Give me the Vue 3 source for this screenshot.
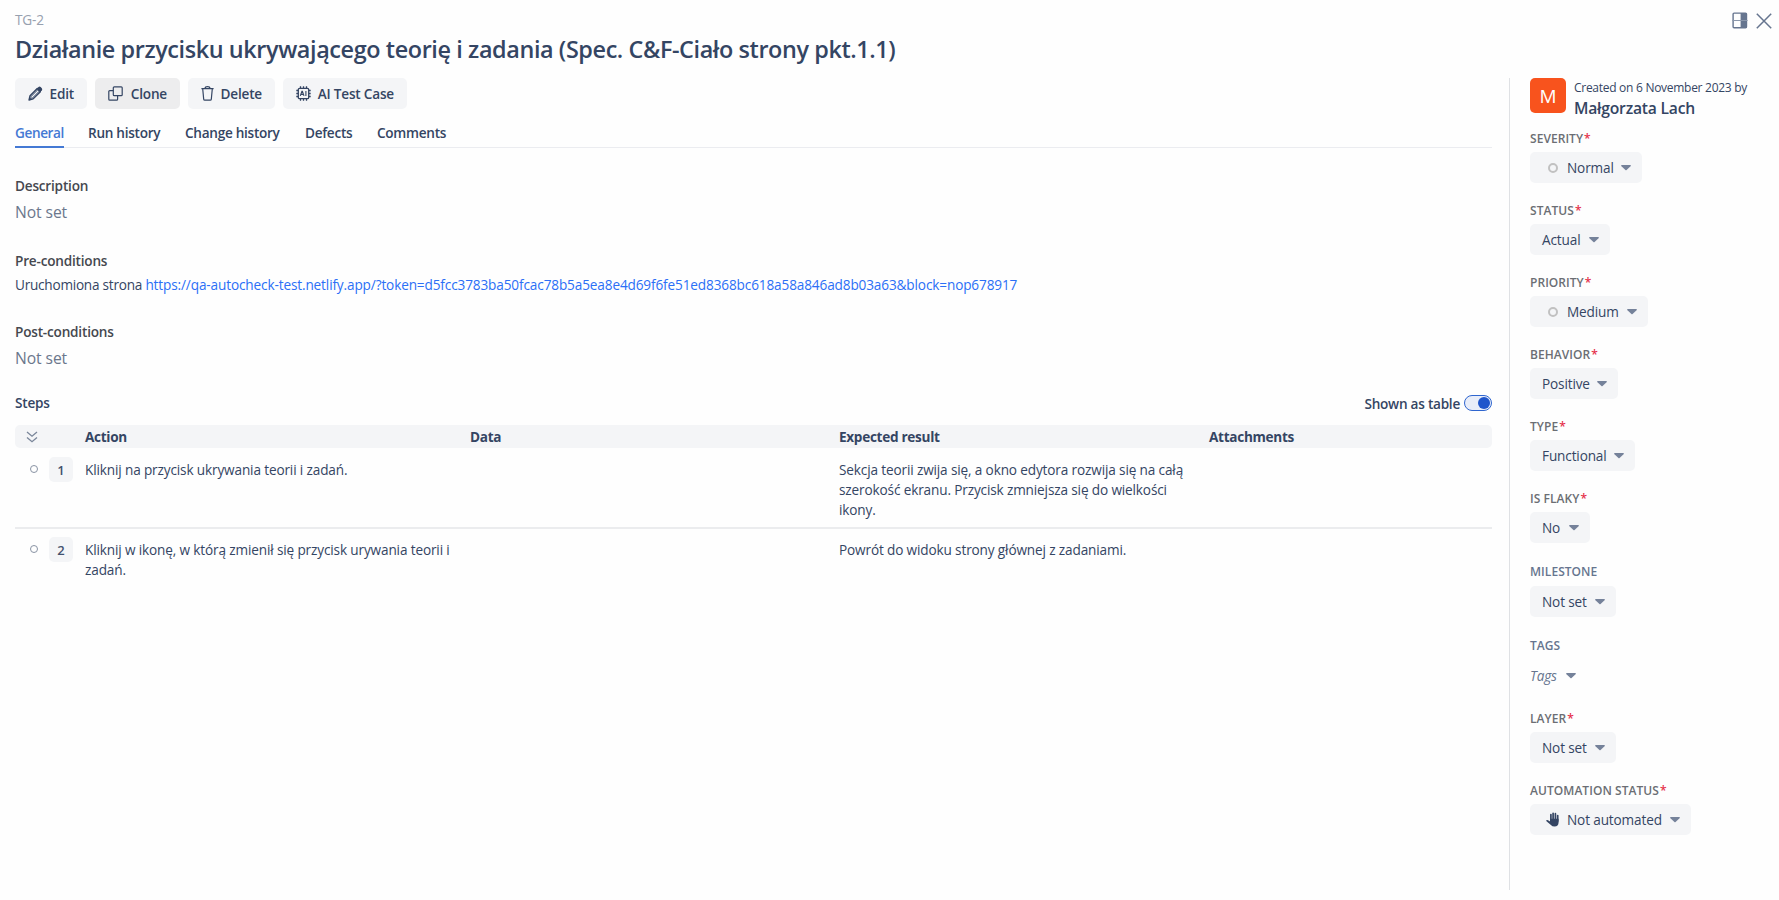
<script setup>
const actions = [
  { label: 'Edit', icon: 'pencil', width: 72 },
  { label: 'Clone', icon: 'clone', width: 85, hovered: true },
  { label: 'Delete', icon: 'trash', width: 87 },
  { label: 'AI Test Case', icon: 'chip', width: 124 },
]

const tabs = [
  { label: 'General', width: 49, active: true },
  { label: 'Run history', width: 73 },
  { label: 'Change history', width: 96 },
  { label: 'Defects', width: 48 },
  { label: 'Comments', width: 69 },
]

const steps = [
  {
    n: 1,
    action: 'Kliknij na przycisk ukrywania teorii i zadań.',
    expected: 'Sekcja teorii zwija się, a okno edytora rozwija się na całą szerokość ekranu. Przycisk zmniejsza się do wielkości ikony.',
  },
  {
    n: 2,
    action: 'Kliknij w ikonę, w którą zmienił się przycisk urywania teorii i zadań.',
    expected: 'Powrót do widoku strony głównej z zadaniami.',
  },
]

const fields = [
  { label: 'Severity', required: true, value: 'Normal', icon: 'ring', width: 112 },
  { label: 'Status', required: true, value: 'Actual', width: 80 },
  { label: 'Priority', required: true, value: 'Medium', icon: 'ring', width: 118 },
  { label: 'Behavior', required: true, value: 'Positive', width: 88 },
  { label: 'Type', required: true, value: 'Functional', width: 105 },
  { label: 'Is flaky', required: true, value: 'No', width: 60 },
  { label: 'Milestone', value: 'Not set', width: 86 },
  { label: 'Tags', value: 'Tags', plain: true, width: 46 },
  { label: 'Layer', required: true, value: 'Not set', width: 86 },
  { label: 'Automation status', required: true, value: 'Not automated', icon: 'hand', width: 161 },
]
</script>

<template>
  <div class="page">
    <header class="head">
      <div class="head-text">
        <div class="code">TG-2</div>
        <h1 class="title">Działanie przycisku ukrywającego teorię i zadania (Spec. C&amp;F-Ciało strony pkt.1.1)</h1>
      </div>
      <div class="window-tools">
        <svg width="16" height="17" viewBox="0 0 16 17">
          <rect x="1.1" y="1.1" width="13.4" height="14.6" rx="1" fill="none" stroke="#66758f" stroke-width="1.4" />
          <rect x="8.6" y="1" width="6" height="15" fill="#66758f" />
          <path d="M0.4 8.5H15.6" stroke="#8b97ab" stroke-width="1" />
        </svg>
        <svg width="16" height="16" viewBox="0 0 16 16">
          <path d="M0.8 0.8L15.2 15.2M15.2 0.8L0.8 15.2" stroke="#66758f" stroke-width="1.5" />
        </svg>
      </div>
    </header>

    <div class="body">
      <main class="main">
        <div class="toolbar">
          <button
            v-for="a in actions"
            :key="a.label"
            class="btn"
            :class="{ hovered: a.hovered }"
            :style="{ width: a.width + 'px' }"
          >
            <svg v-if="a.icon === 'pencil'" width="15" height="15" viewBox="0 0 15 15">
              <path d="M1 14L2 9.7L9.2 2.5L12.4 5.7L5.2 12.9Z" fill="#8994a8" stroke="#344563" stroke-width="1.3" stroke-linejoin="round" />
              <path d="M3.8 11.2L10 5" stroke="#f4f5f7" stroke-width="1" />
              <path d="M8.8 2.6L10.5 1Q11.6 0.2 12.7 1.1L13.8 2.2Q14.7 3.3 13.9 4.3L12.2 6.1Z" fill="#344563" />
              <path d="M1 14L1.6 11.4L3.6 13.3Z" fill="#344563" />
            </svg>
            <svg v-else-if="a.icon === 'clone'" width="15" height="15" viewBox="0 0 15 15" fill="none" stroke="#344563" stroke-width="1.2">
              <rect x="5.3" y="0.8" width="8.9" height="8.9" rx="1" />
              <path d="M5.2 4.6H1.8Q0.8 4.6 0.8 5.6V13.2Q0.8 14.2 1.8 14.2H8.6Q9.6 14.2 9.6 13.2V9.8" />
            </svg>
            <svg v-else-if="a.icon === 'trash'" width="13" height="15" viewBox="0 0 13 15" fill="none" stroke="#344563" stroke-width="1.2">
              <path d="M0.4 2.7H12.6M4 2.5Q4.2 0.7 6.5 0.7T9 2.5M1.7 2.8L2.7 13.2Q2.8 14.2 3.8 14.2H9.2Q10.2 14.2 10.3 13.2L11.3 2.8" />
            </svg>
            <svg v-else width="15" height="15" viewBox="0 0 15 15" fill="none" stroke="#344563" stroke-width="1.3">
              <rect x="2.3" y="2.3" width="10.4" height="10.4" rx="1.3" />
              <path d="M4.5 0.3V2.3M7.5 0.3V2.3M10.5 0.3V2.3M4.5 12.7V14.7M7.5 12.7V14.7M10.5 12.7V14.7M0.3 4.5H2.3M0.3 7.5H2.3M0.3 10.5H2.3M12.7 4.5H14.7M12.7 7.5H14.7M12.7 10.5H14.7" />
              <path d="M4.3 9.9L5.9 5.2H6.4L8 9.9M5 8.4H7.4M9.9 5V10" stroke-width="1.1" />
            </svg>
            <span>{{ a.label }}</span>
          </button>
        </div>

        <nav class="tabs">
          <a
            v-for="t in tabs"
            :key="t.label"
            class="tab"
            :class="{ active: t.active }"
            :style="{ width: t.width + 'px' }"
          >{{ t.label }}</a>
        </nav>

        <section class="block description">
          <h2 class="caption">Description</h2>
          <p class="empty">Not set</p>
        </section>
        <section class="block">
          <h2 class="caption">Pre-conditions</h2>
          <p class="text">
            <span class="lead">Uruchomiona strona </span><a class="link">https://qa-autocheck-test.netlify.app/?token=d5fcc3783ba50fcac78b5a5ea8e4d69f6fe51ed8368bc618a58a846ad8b03a63&amp;block=nop678917</a>
          </p>
        </section>
        <section class="block post">
          <h2 class="caption">Post-conditions</h2>
          <p class="empty">Not set</p>
        </section>

        <div class="steps-head">
          <h2 class="caption blue">Steps</h2>
          <div class="toggle-row">
            <span>Shown as table</span>
            <span class="toggle"><span class="knob"></span></span>
          </div>
        </div>

        <div class="table">
          <div class="row table-head">
            <span class="chevrons">
              <svg width="12" height="12" viewBox="0 0 12 12" fill="none" stroke="#7a869a" stroke-width="1.3">
                <path d="M1 0.9L6 5.2L11 0.9M1 6.4L6 10.7L11 6.4" />
              </svg>
            </span>
            <span></span>
            <span>Action</span>
            <span>Data</span>
            <span>Expected result</span>
            <span>Attachments</span>
          </div>
          <div v-for="s in steps" :key="s.n" class="row step">
            <span class="dot-cell"><span class="dot"></span></span>
            <span class="badge">{{ s.n }}</span>
            <span class="cell">{{ s.action }}</span>
            <span></span>
            <span class="cell">{{ s.expected }}</span>
            <span></span>
          </div>
        </div>
      </main>

      <aside class="side">
        <div class="author">
          <span class="avatar">M</span>
          <div>
            <div class="created">Created on 6 November 2023 by</div>
            <div class="name">Małgorzata Lach</div>
          </div>
        </div>

        <div
          v-for="f in fields"
          :key="f.label"
          class="field"
          :class="{ optional: !f.required, 'tags-field': f.plain }"
        >
          <div class="label">{{ f.label }}<span v-if="f.required" class="star">*</span></div>
          <div class="select" :class="{ plain: f.plain }" :style="{ width: f.width + 'px' }">
            <span v-if="f.icon" class="icon">
              <span v-if="f.icon === 'ring'" class="ring"></span>
              <svg v-else width="14" height="15" viewBox="0 0 14 15">
                <path
                  d="M4.9 8V2.6M7.1 7.5V1.3M9.4 8V1.7M11.7 9V3.6"
                  stroke="#344563" stroke-width="1.7" stroke-linecap="round"
                />
                <path
                  d="M4 6.8H12.6V10.2Q12.4 14.6 8.6 14.6Q6.2 14.6 4.9 13L0.5 9.3Q-0.1 8.4 0.8 8Q1.6 7.7 2.5 8.4L4 9.4Z"
                  fill="#344563"
                />
              </svg>
            </span>
            <span class="value">{{ f.value }}</span>
            <svg class="caret" width="10" height="6" viewBox="0 0 9 6" preserveAspectRatio="none">
              <path d="M0.7 0H8.3Q9.3 0.5 8.6 1.3L5 5.1Q4.5 5.6 4 5.1L0.4 1.3Q-0.3 0.5 0.7 0Z" fill="#75829a" />
            </svg>
          </div>
        </div>
      </aside>
    </div>
  </div>
</template>

<style>
body {
  background: #fefefe;
}
</style>

<style scoped>
.page {
  box-sizing: border-box;
  width: 1779px;
  height: 900px;
  padding: 10px 7px 0 15px;
  overflow: hidden;
  background: #fefefe;
  color: #344563;
  font-family: "Open Sans", "Noto Sans", sans-serif;
  font-size: 13.6px;
  line-height: 20px;
  letter-spacing: -0.14px;
}
h1, h2, p {
  margin: 0;
}
.head {
  display: flex;
  justify-content: space-between;
  height: 68px;
}
.code {
  color: #97a0af;
}
.title {
  margin-top: 3px;
  font-size: 23.4px;
  font-weight: 600;
  line-height: 33px;
  letter-spacing: -0.39px;
}
.window-tools {
  display: flex;
  align-items: flex-start;
  gap: 8px;
  padding-top: 2px;
}
.window-tools svg:last-child {
  margin-top: 1px;
}
.body {
  display: flex;
  height: 812px;
}
.main {
  width: 1477px;
  margin-right: 17px;
}
.toolbar {
  display: flex;
  gap: 8px;
}
.btn {
  display: flex;
  align-items: center;
  justify-content: space-between;
  box-sizing: border-box;
  height: 31px;
  padding: 0 13px 0 13px;
  border: 0;
  border-radius: 5px;
  background: #f4f5f7;
  color: #344563;
  font: 600 13.6px/20px "Open Sans", "Noto Sans", sans-serif;
  letter-spacing: -0.2px;
}
.btn.hovered {
  background: #ededee;
}
.tabs {
  display: flex;
  gap: 24px;
  height: 24px;
  margin-top: 14px;
  border-bottom: 1px solid #ebecf0;
}
.tab {
  height: 23px;
  font-weight: 600;
  letter-spacing: -0.28px;
  white-space: nowrap;
}
.tab.active {
  border-bottom: 2px solid #4479d4;
  color: #4479d4;
  letter-spacing: -0.4px;
}
.description {
  margin-top: 28px;
}
.block {
  margin-bottom: 27px;
}
.caption {
  color: #45484f;
  font-size: 13.6px;
  font-weight: 600;
  line-height: 20px;
  letter-spacing: -0.2px;
}
.caption.blue {
  color: #344563;
}
.empty {
  margin-top: 4px;
  color: #6b778c;
  font-size: 15.7px;
  line-height: 24px;
  letter-spacing: -0.1px;
}
.text {
  margin-top: 4px;
  white-space: nowrap;
}
.lead {
  letter-spacing: -0.24px;
}
.link {
  color: #2b6ff6;
  letter-spacing: -0.13px;
}
.post {
  margin-bottom: 0;
}
.steps-head {
  display: flex;
  justify-content: space-between;
  height: 32px;
  margin-top: 23px;
}
.toggle-row {
  display: flex;
  gap: 4px;
  padding-top: 1px;
  font-weight: 600;
  letter-spacing: -0.25px;
}
.toggle {
  display: flex;
  align-items: center;
  justify-content: flex-end;
  box-sizing: border-box;
  width: 28px;
  height: 16px;
  margin-top: 1px;
  padding-right: 1px;
  border: 1px solid #2f66cf;
  border-radius: 8px;
  background: #e8edf9;
}
.knob {
  width: 12px;
  height: 12px;
  border-radius: 50%;
  background: #1f55cb;
}
.row {
  display: grid;
  grid-template-columns: 34px 36px 385px 369px 369px 284px;
}
.table-head {
  height: 23px;
  margin-bottom: 1px;
  border-radius: 5px;
  background: #f4f5f7;
  font-weight: 700;
  line-height: 24px;
  letter-spacing: -0.3px;
}
.table-head span:nth-child(6) {
  padding-left: 1px;
}
.chevrons {
  display: flex;
  align-items: center;
  padding-left: 11px;
}
.step {
  box-sizing: border-box;
  padding: 8px 0;
}
.step:nth-child(2) {
  height: 80px;
  border-bottom: 2px solid #ebecee;
}
.dot-cell {
  padding: 8px 0 0 15px;
}
.dot {
  display: block;
  box-sizing: border-box;
  width: 8px;
  height: 8px;
  border: 1px solid #8993a4;
  border-radius: 50%;
}
.badge {
  width: 24px;
  height: 25px;
  border-radius: 5px;
  background: #f4f5f7;
  color: #42526e;
  font-size: 13px;
  font-weight: 600;
  line-height: 27px;
  text-align: center;
}
.cell {
  width: 369px;
  padding-top: 3px;
}
.cell:nth-child(5) {
  width: 350px;
}
.side {
  box-sizing: border-box;
  width: 250px;
  padding-left: 20px;
  border-left: 1px solid #dfe1e4;
}
.author {
  display: flex;
  gap: 8px;
  height: 42px;
}
.avatar {
  width: 36px;
  height: 35px;
  border-radius: 5px;
  background: #f8531d;
  color: #fff;
  font-size: 19px;
  font-weight: 500;
  line-height: 36px;
  text-align: center;
}
.created {
  font-size: 12px;
  line-height: 20px;
  letter-spacing: -0.28px;
  white-space: nowrap;
}
.name {
  font-size: 15.7px;
  font-weight: 600;
  line-height: 21px;
  letter-spacing: -0.22px;
}
.field {
  height: 72px;
}
.label {
  height: 20px;
  margin-bottom: 12px;
  color: #6b6e74;
  font-size: 12px;
  font-weight: 600;
  line-height: 37px;
  letter-spacing: 0.05px;
  text-transform: uppercase;
  white-space: nowrap;
}
.star {
  margin-left: 1px;
  color: #e5314b;
}
.optional .label {
  color: #66758f;
  line-height: 39px;
}
.select {
  display: flex;
  align-items: center;
  box-sizing: border-box;
  height: 31px;
  padding: 0 11px 0 12px;
  border-radius: 5px;
  background: #f4f5f7;
  white-space: nowrap;
}
.icon {
  display: flex;
  align-items: center;
  justify-content: center;
  width: 22px;
  margin-right: 3px;
}
.ring {
  box-sizing: border-box;
  width: 10px;
  height: 10px;
  border: 2px solid #c1c1c1;
  border-radius: 50%;
}
.caret {
  margin-left: auto;
}
.select.plain {
  padding: 0;
  background: none;
  color: #66758f;
  font-style: italic;
}
.field.optional {
  height: 74px;
}
.field.optional .label {
  margin-bottom: 14px;
}
</style>
